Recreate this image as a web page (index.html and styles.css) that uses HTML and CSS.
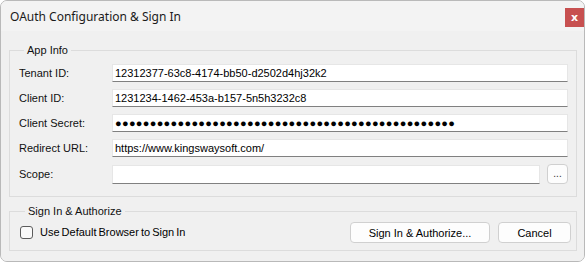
FILE: index.html
```html
<!DOCTYPE html>
<html>
<head>
<meta charset="utf-8">
<link rel="stylesheet" href="styles.css">
</head>
<body>
<div class="window">
  <div class="titlebar">
    <span class="title">OAuth Configuration &amp; Sign In</span>
    <button class="close">x</button>
  </div>
  <div class="content">
    <fieldset class="group app">
      <legend>App Info</legend>
      <div class="form">
        <label>Tenant ID:</label>
        <div class="field">12312377-63c8-4174-bb50-d2502d4hj32k2</div>
        <label>Client ID:</label>
        <div class="field">1231234-1462-453a-b157-5n5h3232c8</div>
        <label>Client Secret:</label>
        <div class="field secret">●●●●●●●●●●●●●●●●●●●●●●●●●●●●●●●●●●●●●●●●●●●●●●●●●</div>
        <label>Redirect URL:</label>
        <div class="field">https://www.kingswaysoft.com/</div>
        <label>Scope:</label>
        <div class="scope-row">
          <div class="field scope"></div>
          <button class="btn dots">...</button>
        </div>
      </div>
    </fieldset>
    <fieldset class="group auth">
      <legend>Sign In &amp; Authorize</legend>
      <div class="auth-row">
        <div class="check-wrap">
          <span class="checkbox"></span>
          <span class="check-label">Use Default Browser to Sign In</span>
        </div>
        <div class="buttons">
          <button class="btn sign">Sign In &amp; Authorize...</button>
          <button class="btn cancel">Cancel</button>
        </div>
      </div>
    </fieldset>
  </div>
</div>
</body>
</html>
```

FILE: styles.css
```css
html, body {
  margin: 0;
  padding: 0;
  background: #ffffff;
}

body {
  font-family: "Liberation Sans", Arial, sans-serif;
  font-size: 11px;
  color: #000;
}

.window {
  width: 585px;
  height: 262px;
  box-sizing: border-box;
  border: 1px solid #b9b9b9;
  border-radius: 7px;
  overflow: hidden;
  background: #f0f0f0;
  display: flex;
  flex-direction: column;
}

.titlebar {
  height: 30px;
  background: #f3f3f3;
  display: flex;
  align-items: flex-start;
  justify-content: space-between;
  flex: none;
}

.title {
  font-family: "Noto Sans", "Open Sans", sans-serif;
  font-size: 12px;
  line-height: 16px;
  margin-top: 8px;
  margin-left: 9px;
  color: #1a1a1a;
}

.close {
  width: 19px;
  height: 19px;
  margin-top: 7px;
  margin-right: 0;
  padding: 0;
  border: none;
  background: #c75050;
  color: #fff;
  font-family: "DejaVu Sans", sans-serif;
  font-weight: bold;
  font-size: 11px;
  line-height: 17px;
}

.content {
  flex: 1;
  padding: 13px 7px 0 8px;
  background: #f0f0f0;
}

.group {
  margin: 0;
  border: 1px solid #dcdcdc;
  min-width: 0;
}

.group legend {
  margin-left: 5px;
  padding: 0 3px 0 3px;
  line-height: 13px;
  color: #111;
}

.app {
  padding: 7px 8px 12px 9px;
}

.form {
  display: grid;
  grid-template-columns: 93px 1fr;
  row-gap: 7px;
  align-items: center;
}

.form label {
  line-height: 13px;
  color: #111;
}

.field {
  height: 18px;
  box-sizing: border-box;
  background: #fff;
  border: 1px solid #e6e6e6;
  border-bottom-color: #808080;
  padding: 0 2px;
  line-height: 16px;
  white-space: nowrap;
  overflow: hidden;
}

.secret {
  font-size: 11px;
  letter-spacing: 0.3px;
}

.scope-row {
  display: flex;
  align-items: center;
  gap: 7px;
  height: 20px;
}

.scope {
  flex: 1;
  height: 19px;
}

.btn {
  font-family: "Liberation Sans", Arial, sans-serif;
  font-size: 11px;
  color: #000;
  background: #fdfdfd;
  border: 1px solid #d0d0d0;
  border-radius: 4px;
  padding: 0;
  box-sizing: border-box;
}

.dots {
  width: 21px;
  height: 20px;
  line-height: 18px;
  font-size: 10px;
  color: #303030;
}

.auth {
  margin-top: 8px;
  padding: 4px 5px 7px 10px;
}

.auth-row {
  display: flex;
  justify-content: space-between;
  align-items: center;
  height: 21px;
}

.check-wrap {
  display: flex;
  align-items: center;
  gap: 7px;
}

.checkbox {
  width: 13px;
  height: 13px;
  box-sizing: border-box;
  border: 1px solid #5c5c5c;
  border-radius: 3px;
  background: #fafafa;
}

.check-label {
  line-height: 13px;
  word-spacing: -1px;
}

.buttons {
  display: flex;
  gap: 8px;
}

.sign {
  width: 140px;
  height: 21px;
}

.cancel {
  width: 73px;
  height: 21px;
}
```
